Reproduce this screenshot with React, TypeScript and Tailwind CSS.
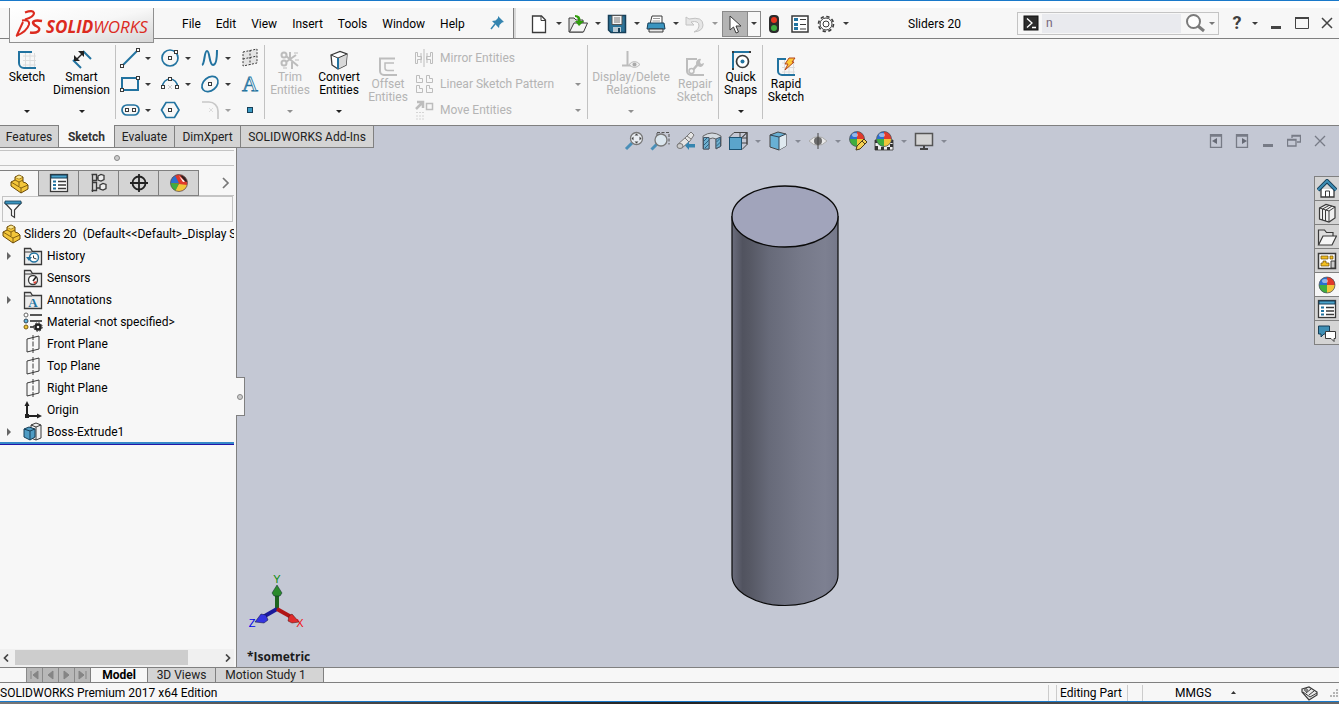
import type { ReactNode } from 'react';

const BLUE = '#2273a0';
const DARK = '#3a3a3a';
const GREY = '#bdbdbd';

function Svg({ children, w = 20, h = 20 }: { children: ReactNode; w?: number; h?: number }) {
  return (
    <svg width={w} height={h} viewBox={`0 0 ${w} ${h}`} fill="none" className="block shrink-0" aria-hidden="true">
      {children}
    </svg>
  );
}

function Caret({ color = DARK }: { color?: string }) {
  return (
    <Svg w={6} h={3}>
      <path d="M0 0h6L3 3z" fill={color} />
    </Svg>
  );
}

// little square handle drawn on sketch entities
function Node({ x, y, color = DARK }: { x: number; y: number; color?: string }) {
  return <rect x={x - 1.5} y={y - 1.5} width="3" height="3" fill="#fff" stroke={color} />;
}

function Ball({ x = 10, y = 10, r = 8 }: { x?: number; y?: number; r?: number }) {
  return (
    <g>
      <circle cx={x} cy={y} r={r} fill="#2b6fd0" />
      <path d={`M${x} ${y}V${y - r}A${r} ${r} 0 0 1 ${x + r} ${y}z`} fill="#e03a2c" />
      <path d={`M${x} ${y}H${x - r}A${r} ${r} 0 0 0 ${x} ${y + r}z`} fill="#3fae3f" />
      <path d={`M${x} ${y}V${y + r}A${r} ${r} 0 0 0 ${x + r} ${y}z`} fill="#f0c63a" />
      <circle cx={x} cy={y} r={r} stroke="#555" strokeWidth=".7" />
      <ellipse cx={x - 2} cy={y - 4} rx="3" ry="2" fill="#fff" opacity=".5" />
    </g>
  );
}

/* ---------- Ribbon icons ---------- */

const SketchIcon = () => (
  <Svg>
    <path d="M6 6h13M6 10.500h13M6 15h13M8.500 3v14M13 3v14M17.500 3v14" stroke="#dcdcdc" />
    <path d="M15 2H2v11a5 5 0 0 0 5 5h12" stroke={BLUE} strokeWidth="2" />
  </Svg>
);

const RapidIcon = () => (
  <Svg>
    <path d="M6 6h13M6 10.500h13M6 15h13M8.500 3v14M13 3v14M17.500 3v14" stroke="#dcdcdc" />
    <path d="M10 2H2v12a4 4 0 0 0 4 4h13" stroke={BLUE} strokeWidth="2" />
    <path d="M13 1h6l-3 4h2l-9 8 3-6H9z" fill="#ffc937" stroke="#b5441c" />
  </Svg>
);

const DimensionIcon = () => (
  <Svg>
    <path d="M1 10l8 8M11 1l8 8" stroke={BLUE} strokeWidth="2" />
    <path d="M4 10L11 3" stroke="#222" strokeWidth="1.500" />
    <path d="M2 11V5l6 6zM12 1v6L6 1z" fill="#222" />
  </Svg>
);

const TrimIcon = () => (
  <Svg>
    <g stroke={GREY} strokeWidth="2">
      <circle cx="4" cy="5" r="2.500" />
      <circle cx="4" cy="13" r="2.500" />
      <path d="M6 6l12 10M6 12L16 5M10 2v6M12 12v7" />
      <path d="M14 3h4M3 18h4M15 10h4" strokeWidth="1" />
    </g>
  </Svg>
);

const ConvertIcon = () => (
  <Svg>
    <path d="M2 5l9-3.500L18 4l-1 11-8 4-6-4z" fill="#fff" stroke={DARK} strokeWidth="1.300" />
    <path d="M9 8l9-4-1 11-8 4z" fill="#d9d9d9" />
    <path d="M2 5l7 3 9-4" stroke={DARK} />
    <path d="M9 8v11" stroke={BLUE} strokeWidth="2" />
  </Svg>
);

const OffsetIcon = () => (
  <Svg>
    <path d="M17 1.500H2V14a4 4 0 0 0 4 4h13" stroke={GREY} strokeWidth="2" />
    <path d="M16 6H7v5a2.500 2.500 0 0 0 2.500 2.500H16" stroke={GREY} strokeWidth="1.500" />
  </Svg>
);

const RelationsIcon = () => (
  <Svg>
    <path d="M6.500 1v15M1 15.500h9" stroke={GREY} strokeWidth="2" />
    <path d="M8 14.500q5.500-6 11 0-5.500 6-11 0z" fill="#eee" stroke={GREY} />
    <circle cx="13.500" cy="14.500" r="2" fill="#aaa" />
  </Svg>
);

const RepairIcon = () => (
  <Svg>
    <path d="M12 2H2v12a4 4 0 0 0 4 4h13" stroke={GREY} strokeWidth="2" />
    <path d="M7 14l7-8" stroke={GREY} strokeWidth="2.500" />
    <path d="M16 2a4 4 0 1 0 3 4l-3 1-1-2z" fill={GREY} />
    <circle cx="6.500" cy="14" r="2.500" fill="#f7f7f7" stroke={GREY} strokeWidth="1.500" />
  </Svg>
);

const SnapsIcon = () => (
  <Svg>
    <path d="M2 19V2h17" stroke={BLUE} strokeWidth="2" />
    <circle cx="11.500" cy="11.500" r="6" fill="#fff" stroke={DARK} strokeWidth="1.700" />
    <circle cx="11.500" cy="11.500" r="2" fill={BLUE} />
    <path d="M1 1h2v2H1zM1 18h2v2H1zM18 1h2v2h-2z" fill={DARK} />
  </Svg>
);

const sketchTools: { name: string; icon: ReactNode; caret?: string }[] = [
  { name: 'Line', caret: DARK, icon: <Svg><path d="M2 18L18 2" stroke={BLUE} strokeWidth="2" /><Node x={2} y={18} /><Node x={18} y={2} /></Svg> },
  { name: 'Circle', caret: DARK, icon: <Svg><circle cx="10" cy="10" r="8" stroke={BLUE} strokeWidth="1.700" /><Node x={10} y={10} /><Node x={16} y={4} /></Svg> },
  { name: 'Spline', caret: DARK, icon: <Svg><path d="M2 17C5 16 4 3 7 3s2 14 6 14 4-11 4-15" stroke={BLUE} strokeWidth="2" /></Svg> },
  { name: 'Sketch Plane', icon: <Svg><path d="M3 4l14-3v14L3 18z" fill="#e4e4e4" /><path d="M3 4l14-3v14L3 18zM10 2v15M3 11l14-3" stroke={DARK} strokeDasharray="2 1.500" /></Svg> },
  { name: 'Rectangle', caret: DARK, icon: <Svg><rect x="2" y="4" width="16" height="12" stroke={BLUE} strokeWidth="2" /><Node x={2} y={16} /><Node x={18} y={4} /></Svg> },
  { name: 'Arc', caret: DARK, icon: <Svg><path d="M2.500 13a7.500 8 0 0 1 15 0" stroke={BLUE} strokeWidth="1.500" /><path d="M8 11l4 4m0-4l-4 4" stroke="#ccc" /><Node x={3} y={13} /><Node x={17} y={13} /><Node x={10} y={5} /></Svg> },
  { name: 'Ellipse', caret: DARK, icon: <Svg><ellipse cx="10" cy="10" rx="9" ry="6.500" transform="rotate(-40 10 10)" stroke={BLUE} strokeWidth="1.700" /><Node x={10} y={10} /></Svg> },
  { name: 'Text', icon: <Svg><text x="10" y="17" textAnchor="middle" fontSize="22" fontFamily="Liberation Serif, serif" fill="#f7f7f7" stroke={BLUE} strokeWidth=".8">A</text></Svg> },
  { name: 'Slot', caret: DARK, icon: <Svg><rect x="2" y="5" width="17" height="10" rx="5" stroke={BLUE} strokeWidth="1.700" /><Node x={7} y={10} /><Node x={14} y={10} /></Svg> },
  { name: 'Polygon', icon: <Svg><path d="M1.500 10L6 2.500h8.500L19 10l-4.500 7.500H6z" stroke={BLUE} strokeWidth="1.700" /><Node x={10} y={10} /></Svg> },
  { name: 'Fillet', caret: '#a0a0a0', icon: <Svg><path d="M2 2h7a9 9 0 0 1 9 9v8" stroke="#c8c8c8" strokeWidth="1.700" /><path d="M9 8l4 4m0-4l-4 4" stroke="#ddd" /></Svg> },
  { name: 'Point', icon: <Svg><rect x="7.500" y="7.500" width="5" height="5" fill="#3b9bc4" stroke="#173f58" /></Svg> },
];

const entityTools = [
  { name: 'Mirror Entities', caret: false, icon: <Svg><path d="M10 1v18M1.500 4.500h2v4h4v3h-4v4h-2zM7 5v10M18.500 4.500h-2v4h-4v3h4v4h2zM13 5v10" stroke={GREY} /></Svg> },
  { name: 'Linear Sketch Pattern', caret: true, icon: <Svg><path d="M2.500 1.500h3v3h3v4h-6zM12.500 1.500h3v3h3v4h-6zM2.500 11.500h3v3h3v4h-6zM12.500 11.500h3v3h3v4h-6z" stroke={GREY} /></Svg> },
  { name: 'Move Entities', caret: true, icon: <Svg><path d="M2 9l6-6M3 2h6v6" stroke={GREY} strokeWidth="2.500" /><rect x="12.500" y="3.500" width="6" height="6" stroke={GREY} strokeWidth="1.500" /><path d="M2 12.500h8M2 16h8M2 19h8" stroke="#d5d5d5" strokeDasharray="2 1" /></Svg> },
];

/* ---------- Quick access icons ---------- */

const quickTools = [
  { name: 'New', off: false, icon: <Svg><path d="M3.500 2h9l4 4v12.500h-13z" fill="#fff" stroke={DARK} strokeWidth="1.300" /><path d="M12 2v4.500h4.500" stroke={DARK} /></Svg> },
  { name: 'Open', off: false, icon: <Svg><path d="M1 4h5l2 2h7v12H1z" fill="#ddd" stroke={DARK} /><path d="M1.500 18L6 9h13.500l-4 9z" fill="#f4f4f4" stroke={DARK} /><path d="M7 1q6 0 5.500 6H16l-5 5-4-5h3q0-4-3-4z" fill="#2f9d0c" /></Svg> },
  { name: 'Save', off: false, icon: <Svg><path d="M1.500 1.500h17v17H4l-2.500-2.500z" fill="#2d7296" stroke="#173f58" strokeWidth="1.500" /><path d="M5 1.500h10v9H5z" fill="#f4f4f4" stroke="#555" /><path d="M7 4h6M7 6h6M7 8h6" stroke="#777" /><path d="M6 13h8v5H6z" fill="#b9cad4" /><path d="M11 14h2v4h-2z" fill="#173f58" /></Svg> },
  { name: 'Print', off: false, icon: <Svg><path d="M6 2h10v8H4z" fill="#fff" stroke={DARK} /><path d="M2 9h16l1 6H1z" fill="#3a94bf" stroke="#173f58" /><path d="M3 15h14v3H3z" fill="#e8e8e8" stroke={DARK} /><path d="M7 4.500h7M6.500 7H14" stroke="#999" /></Svg> },
  { name: 'Undo', off: true, icon: <Svg><path d="M1 3v8h8L6 8q8-2 8 4 0 4-5 6 9-1 9-7 0-9-14-6z" fill="#e6e6e6" stroke="#c2c2c2" /></Svg> },
];

const GearIcon = () => (
  <Svg>
    <circle cx="10" cy="10" r="7.500" stroke={DARK} strokeWidth="1.600" strokeDasharray="3.400 2.500" />
    <circle cx="10" cy="10" r="6" fill="#fff" stroke={DARK} />
    <circle cx="10" cy="10" r="3" fill="#fff" stroke={DARK} />
  </Svg>
);

const ListIcon = () => (
  <Svg>
    <rect x="2" y="2" width="16" height="16" fill="#fff" stroke={DARK} strokeWidth="1.500" />
    <path d="M4 4h4v3H4zM4 9h4v3H4zM4 13h4v3H4z" fill={BLUE} />
    <path d="M10 5.500h6M10 10.500h6M10 15h6" stroke={DARK} />
  </Svg>
);

const TableIcon = () => (
  <Svg>
    <rect x="1.500" y="1.500" width="17" height="17" fill="#fff" stroke={DARK} strokeWidth="1.300" />
    <path d="M2 2h16v3H2z" fill="#4ba3cb" stroke="#173f58" />
    <path d="M4 7.500h3v2H4zM4 11h3v2H4zM4 14.500h3v2H4z" fill={BLUE} />
    <path d="M9 8.500h8M9 12h8M9 15.500h8" stroke={DARK} strokeWidth="1.300" />
  </Svg>
);

const PartIcon = () => (
  <Svg>
    <path d="M2 8l4-2V3l4-2 4 2v5l3 1 2 2v4l-7 4L2 12z" fill="#f3c63a" stroke="#6b4a08" />
    <path d="M2 8l10 6v5M12 14l7-3M6 6l4 2 4-2M10 8v4M6 3l4 2 4-2" stroke="#6b4a08" strokeWidth=".8" />
    <path d="M6.500 3.500l3.500-2 3.500 1.500L10 4.700z" fill="#fce892" />
  </Svg>
);

/* ---------- Viewport toolbar ---------- */

const viewTools: { name: string; icon: ReactNode; menu: boolean }[] = [
  { name: 'Zoom to Fit', menu: false, icon: <Svg><path d="M2 18l6-6" stroke="#4a8fb8" strokeWidth="3" /><circle cx="12.500" cy="7.500" r="6" fill="#e9edf2" stroke="#777" strokeWidth="1.300" /><path d="M12.500 2.500l2 2h-4zM12.500 12.500l2-2h-4zM7.500 7.500l2-2v4zM17.500 7.500l-2-2v4z" fill="#444" /></Svg> },
  { name: 'Zoom to Area', menu: false, icon: <Svg><path d="M7 1.500h12v12M7 5V1" stroke="#555" strokeDasharray="3 1.500" /><path d="M1.500 18.500L7 13" stroke="#4a8fb8" strokeWidth="3" /><circle cx="11" cy="9" r="6" fill="#dbe6ee" stroke="#777" strokeWidth="1.300" /></Svg> },
  { name: 'Previous View', menu: false, icon: <Svg><path d="M1 14l9-8 5-5 3 3-4 6-8 7z" fill="#e4e4e4" stroke="#777" /><path d="M9 7l4 4M11 5l4 3" stroke="#777" /><ellipse cx="4" cy="15" rx="3" ry="2.500" fill="#ccc" stroke="#777" /><path d="M9 14.500l4-4v2.500h6v3.500h-6V19z" fill="#3585b0" /></Svg> },
  { name: 'Section View', menu: false, icon: <Svg><path d="M1 5q9-6 18 0v10l-5 3V8q-3-2-7 0v10H1z" fill="#d3dae0" stroke="#666" /><path d="M1.500 6.500H7v11.500H1.500zM14 8l4.500-2v9.500l-4.500 2z" fill="#6eb0d0" stroke="#456" /><path d="M2 10l3-3M2 14l5-5M3 17l4-4M14.500 11l4-4M14.500 15l4-4" stroke="#2f6380" /></Svg> },
  { name: 'View Orientation', menu: true, icon: <Svg><path d="M6 1.500h13v12M19 1.500l-5 5M6 1.500l-5 5M12 2v9M19 7h-9M10 12h9" stroke="#444" /><rect x="1.500" y="6.500" width="12" height="12" fill="#5ba4cb" stroke="#1c5373" /><path d="M14 18.500l5-5v-12l-5 5" stroke="#444" /></Svg> },
  { name: 'Display Style', menu: true, icon: <Svg><path d="M2 4l8-3 8 2v12l-7 4-9-3z" fill="#68b0d4" stroke="#444" /><path d="M11 6l7-3v12l-7 4z" fill="#dfe9ef" /><path d="M2 4l9 2 7-3M11 6v13" stroke="#345" /></Svg> },
  { name: 'Hide/Show Items', menu: true, icon: <Svg><path d="M1 10q9-9 18 0-9 9-18 0z" fill="#e8e8e8" stroke="#aaa" /><circle cx="10" cy="10" r="4" fill="#6c6c6c" /><path d="M10 2v16" stroke="#444" /></Svg> },
  { name: 'Edit Appearance', menu: false, icon: <Svg><Ball x={9} y={8} r={7.5} /><path d="M8 19l1-4 7-7 3 3-7 7z" fill="#f4cf52" stroke="#4a3a16" /><path d="M14 10l3 3" stroke="#4a3a16" /></Svg> },
  { name: 'Apply Scene', menu: true, icon: <Svg><path d="M1 9h18v10H1z" fill="#eee" stroke="#555" /><path d="M1 9h4v3H1zM15 9h4v3h-4zM1 15h3v4H1zM7 16h3v3H7zM13 16h3v3h-3zM16 13h3v3h-3z" fill="#333" /><Ball x={10} y={8} r={7.5} /></Svg> },
  { name: 'View Settings', menu: true, icon: <Svg><rect x="1.500" y="2.500" width="17" height="12" fill="#d4d4d4" stroke="#555" strokeWidth="1.500" /><path d="M10 15v3M6 18h8" stroke="#444" strokeWidth="2" /></Svg> },
];

const windowTools = [
  { name: 'Previous pane', icon: <Svg w={14} h={14}><path d="M1.500.500h11v13h-11zM1 2h12" stroke="#777b86" strokeWidth="1.300" /><path d="M8 4v6L3 7z" fill="#666a75" /></Svg> },
  { name: 'Next pane', icon: <Svg w={14} h={14}><path d="M1.500.500h11v13h-11zM1 2h12" stroke="#777b86" strokeWidth="1.300" /><path d="M7 4v6l5-3z" fill="#666a75" /></Svg> },
  { name: 'Minimize document', icon: <Svg w={14} h={14}><path d="M2 10h10v3H2z" fill="#777b86" /></Svg> },
  { name: 'Restore document', icon: <Svg w={14} h={14}><path d="M5 4V1.500h8.500V8H10M4.500 2h9M.500 5.500H9V12H.500zM.500 6H9" stroke="#777b86" strokeWidth="1.300" /></Svg> },
  { name: 'Close document', icon: <Svg w={14} h={14}><path d="M2 2l10 10M12 2L2 12" stroke="#777b86" strokeWidth="1.300" /></Svg> },
];

/* ---------- Side panel ---------- */

const panelTabs = [
  { name: 'FeatureManager', icon: <PartIcon /> },
  { name: 'PropertyManager', icon: <TableIcon /> },
  { name: 'ConfigurationManager', icon: <Svg><path d="M3.500 1v18M2.500 1.500h5v6h-4M7 5h3M3.500 9.500h4v8h-5M8 15h3" stroke={DARK} strokeWidth="1.300" /><path d="M9 3l3-1.500 3 1v4L12 8 9 7zM11 12l3-1.500 3 1v4l-3 1.500-3-1z" fill="#eee" stroke={DARK} strokeWidth="1.300" /></Svg> },
  { name: 'DimXpertManager', icon: <Svg><circle cx="10" cy="10" r="6.500" stroke="#222" strokeWidth="1.800" /><path d="M10 1v18M1 10h18" stroke="#222" strokeWidth="1.800" /></Svg> },
  { name: 'DisplayManager', icon: <Svg><circle cx="10" cy="10" r="8.500" fill="#e03a2c" /><path d="M10 10L1.500 10a8.500 8.500 0 0 1 7.500-8.500z" fill="#2b6fd0" /><path d="M10 10L6 2.500a8.500 8.500 0 0 1 4-1z" fill="#e03a2c" /><path d="M11 2q6 1 7.500 7L16 8.500z" fill="#2a2020" /><path d="M10 11l8 1a8.500 8.500 0 0 1-12 5.500z" fill="#f0c63a" /><path d="M10 10.500L1.500 10q0 5 5 7.800z" fill="#3fae3f" /><path d="M10 3l4 6 2-.500z" fill="#fff" /><circle cx="10" cy="10" r="8.500" stroke="#555" strokeWidth=".7" /></Svg> },
];

const Folder = ({ children }: { children: ReactNode }) => (
  <Svg>
    <path d="M1.500 18.500v-16h6l2 3h9v13z" fill="#ededed" stroke={DARK} strokeWidth="1.300" />
    <path d="M2 6h7" stroke={DARK} />
    {children}
  </Svg>
);

const PlaneIcon = () => (
  <Svg>
    <path d="M4 5l12-3v13L4 18z" stroke={DARK} />
    <path d="M10 1v19" stroke={DARK} strokeDasharray="5 1.500" />
  </Svg>
);

const treeItems: { name: string; icon: ReactNode; open?: boolean }[] = [
  { name: 'History', open: true, icon: <Folder><circle cx="11" cy="11.500" r="4.500" fill="#fff" stroke={BLUE} strokeWidth="1.400" /><path d="M3 11h6l-3 4z" fill={BLUE} /><path d="M10.500 9.500V12l3 1" stroke={DARK} /></Folder> },
  { name: 'Sensors', icon: <Folder><circle cx="10" cy="12" r="4.500" fill="#fff" stroke={DARK} strokeWidth="1.300" /><path d="M10 13l3-4" stroke="#222" strokeWidth="1.500" /><path d="M10 14l4-1-2 3z" fill="#e03a2c" /></Folder> },
  { name: 'Annotations', open: true, icon: <Folder><text x="10" y="17" textAnchor="middle" fontSize="13" fontWeight="700" fontFamily="Liberation Serif, serif" fill={BLUE}>A</text></Folder> },
  { name: 'Material <not specified>', icon: <Svg><circle cx="3" cy="3" r="2" fill="#fff" stroke="#666" /><circle cx="3" cy="9" r="2" fill="#5fb7de" stroke="#345" /><circle cx="3" cy="15" r="2" fill="#f0c63a" stroke="#7a5d10" /><path d="M7 3h12M7 9h12M7 15h4" stroke="#222" strokeWidth="1.500" /><circle cx="15" cy="15" r="2.500" stroke="#222" strokeWidth="2.500" /><circle cx="15" cy="15" r="4.200" stroke="#222" strokeDasharray="1.700 1.600" /></Svg> },
  { name: 'Front Plane', icon: <PlaneIcon /> },
  { name: 'Top Plane', icon: <PlaneIcon /> },
  { name: 'Right Plane', icon: <PlaneIcon /> },
  { name: 'Origin', icon: <Svg><path d="M4 4v12h12" stroke="#222" strokeWidth="2" /><path d="M4 1l2.500 5h-5zM19 16l-5-2.500v5z" fill="#222" /><path d="M2 14h4v4H2z" fill="#222" /></Svg> },
  { name: 'Boss-Extrude1', open: true, icon: <Svg><path d="M8 3l5-2 5 2v13l-5 2-5-2z" fill="#f0f0f0" stroke={DARK} /><path d="M13 5v13M8 3l5 2 5-2" stroke={DARK} /><path d="M1 7l5-2 6 2v8l-5 3-6-3z" fill="#4f9cc4" stroke="#173f58" /><path d="M1 7l6 2 5-2M7 9v9" stroke="#173f58" /></Svg> },
];

const taskTabs = [
  { name: 'Home', icon: <Svg><path d="M4 10v8h13v-8" fill="#fff" stroke={DARK} strokeWidth="1.300" /><path d="M1 11l9-9 9 9" stroke="#173f58" strokeWidth="4" /><path d="M1 11l9-9 9 9" stroke="#3d8db5" strokeWidth="2" /><path d="M8.500 18v-6h4v6" stroke={DARK} /></Svg> },
  { name: 'Design Library', icon: <Svg><path d="M2.500 5L9 1.500 18 4v11l-6 4-9.500-3z" fill="#f0f0f0" stroke={DARK} strokeWidth="1.200" /><path d="M2.500 5L12 8l6-4M12 8v11M5.500 6v11M8.500 7v11M5.500 6L12 2.500M9 7l6-4" stroke={DARK} /></Svg> },
  { name: 'File Explorer', icon: <Svg><path d="M1.500 18V3h6l2 2.500H16V9" fill="#ddd" stroke={DARK} strokeWidth="1.200" /><path d="M1.500 18L6 9h13.500L15 18z" fill="#f6f6f6" stroke={DARK} strokeWidth="1.200" /></Svg> },
  { name: 'View Palette', icon: <Svg><rect x="1.500" y="2.500" width="17" height="15" fill="#fff" stroke={DARK} strokeWidth="1.500" /><path d="M4 5h7v3H4zM13 5h3v3h-3zM6 10h3v2h3v3H4v-3h2z" fill="#f4c020" stroke="#6b4a08" strokeWidth=".7" /><path d="M14 10h4v7h-4z" fill="#ccc" stroke={DARK} /></Svg> },
  { name: 'Appearances', icon: <Svg><Ball /></Svg> },
  { name: 'Custom Properties', icon: <TableIcon /> },
  { name: 'Forum', icon: <Svg><path d="M1.500 3h11v8H7l-3 3v-3H1.500z" fill="#3f8fb5" stroke="#173f58" /><path d="M8.500 8.500h10v7H17v3l-3-3H8.500z" fill="#fff" stroke={DARK} /></Svg> },
];

/* ---------- Pieces ---------- */

function BigButton({ label, icon, width, menu, off, low }: {
  label: string;
  icon: ReactNode;
  width: string;
  menu?: boolean;
  off?: boolean;
  low?: boolean;
}) {
  return (
    <button type="button" className={`flex flex-col items-center leading-[13px] ${width} ${low ? 'pt-[18px]' : 'pt-[11px]'} ${off ? 'text-[#b4b4b4]' : 'text-black'}`}>
      {icon}
      <span className="w-min pt-px text-center">{label}</span>
      {menu && <span className="mt-auto pb-3"><Caret color={off ? '#909090' : '#222'} /></span>}
    </button>
  );
}

function Logo() {
  return (
    <div className="absolute left-[9px] top-0 z-10 flex h-[35px] w-[145px] items-center gap-[2px] border border-t-0 border-[#909090] bg-gradient-to-br from-white via-[#f7f7f7] to-[#d6d6d6] pl-1 text-[#dc2b1f]">
      <Svg w={30} h={30}>
        <path d="M11 2.500q8-3 9 .500 0 4-9 6.500" stroke="#dc2b1f" strokeWidth="2.200" />
        <path d="M8 10.500q8-1 7 4-2 7-13 11.500M9 12L3 25" stroke="#dc2b1f" strokeWidth="2" />
        <path d="M28 11q-8-1.500-9 1.500 0 2 4 4t1 5q-3 2-8 1" stroke="#dc2b1f" strokeWidth="2.500" />
      </Svg>
      <span className="pt-1 font-['Open_Sans',sans-serif] text-[17px] italic leading-5"><b>SOLID</b>WORKS</span>
    </div>
  );
}

function TitleBar() {
  return (
    <header className="relative flex h-[31px] items-center border-b border-[#808080]">
      <Logo />
      <div className="flex w-[513px] shrink-0 items-center pl-[182px] pr-2">
        <nav className="flex gap-[15px] pt-px">
          {['File', 'Edit', 'View', 'Insert', 'Tools', 'Window', 'Help'].map((item) => (
            <button key={item} type="button">{item}</button>
          ))}
        </nav>
        <button type="button" aria-label="Pin menu" className="ml-auto">
          <Svg w={16} h={16}>
            <path d="M9 1l6 6-2 .500-2.500 2.500L10 13 3 6l3.500-.500L9 3z" fill="#3585b0" />
            <path d="M6 9l-4 5" stroke="#3585b0" strokeWidth="1.500" />
          </Svg>
        </button>
      </div>
      <div className="h-full w-[3px] border-l border-[#808080] bg-[#d8d8d8]" />
      <div className="ml-[11px] flex items-center pt-px">
        {quickTools.map((tool) => (
          <div key={tool.name} className="flex items-center">
            <button type="button" aria-label={tool.name} className="flex w-6 justify-center">{tool.icon}</button>
            <button type="button" aria-label={`${tool.name} options`} className="flex h-5 w-[15px] items-center justify-center">
              <Caret color={tool.off ? '#999' : DARK} />
            </button>
          </div>
        ))}
        <div className="flex h-[26px] w-[39px] border border-[#8a8a8a]">
          <button type="button" aria-label="Select" className="flex w-[25px] items-center justify-center border-r border-[#8a8a8a] bg-[#b4b4b4]">
            <Svg><path d="M5 2v14l3.500-3 2.500 6 2.500-1-2.500-6h5z" fill="#fff" stroke={DARK} /></Svg>
          </button>
          <button type="button" aria-label="Select options" className="flex grow items-center justify-center"><Caret /></button>
        </div>
        <button type="button" aria-label="Rebuild" className="flex w-[26px] justify-center">
          <Svg><rect x="5" y="1" width="10" height="18" rx="4" fill="#2b2b2b" /><circle cx="10" cy="6" r="3" fill="#e8371f" /><circle cx="10" cy="14" r="3" fill="#3fae3f" /></Svg>
        </button>
        <button type="button" aria-label="File properties" className="flex w-[26px] justify-center"><ListIcon /></button>
        <button type="button" aria-label="Options" className="flex w-[26px] justify-center"><GearIcon /></button>
        <button type="button" aria-label="More options" className="flex h-5 w-[13px] items-center justify-center"><Caret /></button>
      </div>
      <h1 className="grow pt-px text-center">Sliders 20</h1>
      <div className="flex h-[23px] w-[202px] items-center border border-[#c4c4c4] pl-1">
        <Svg>
          <rect x="2" y="3" width="14" height="14" fill="#2c2c2c" stroke="#111" />
          <path d="M5 5.500l5 4.500-5 4.500M10 14.500h4" stroke="#fff" strokeWidth="1.300" />
        </Svg>
        <input aria-label="Search commands" defaultValue="n" className="h-[19px] w-[139px] bg-[#e9eaee] pl-1 text-[#76677a] outline-none" />
        <button type="button" aria-label="Search" className="ml-1">
          <Svg><circle cx="8.500" cy="8.500" r="6.500" fill="#fff" stroke="#7b7b7b" strokeWidth="2" /><path d="M13 13l6 5" stroke="#7b7b7b" strokeWidth="3" /></Svg>
        </button>
        <button type="button" aria-label="Search options" className="flex h-5 grow items-center justify-center"><Caret color="#777" /></button>
      </div>
      <div className="flex items-center pl-2">
        <button type="button" aria-label="Help" className="w-5 text-lg font-bold leading-5 text-[#3f3f3f]">?</button>
        <button type="button" aria-label="Help options" className="flex h-5 w-4 items-center justify-center"><Caret /></button>
        <button type="button" aria-label="Minimize" className="flex w-[26px] justify-center">
          <Svg w={14} h={14}><path d="M2 10h10v3H2z" fill="#444" /></Svg>
        </button>
        <button type="button" aria-label="Maximize" className="flex w-[26px] justify-center">
          <Svg w={14} h={14}><path d="M.500 1.500h13v11H.500z" stroke="#444" /><path d="M0 1h14v2H0z" fill="#444" /></Svg>
        </button>
        <button type="button" aria-label="Close" className="flex w-6 justify-center">
          <Svg w={14} h={14}><path d="M2 2l10 10M12 2L2 12" stroke="#444" strokeWidth="1.500" /></Svg>
        </button>
      </div>
    </header>
  );
}

function Divider() {
  return <div className="my-[6px] w-px bg-[#c2c2c2]" />;
}

function Ribbon() {
  return (
    <section aria-label="Sketch commands" className="flex h-[86px]">
      <div className="flex w-[115px]">
        <BigButton label="Sketch" icon={<SketchIcon />} width="w-[54px]" menu />
        <BigButton label="Smart Dimension" icon={<DimensionIcon />} width="w-[55px]" menu />
      </div>
      <Divider />
      <div className="grid w-[148px] auto-rows-[26px] grid-cols-[40px_40px_40px_28px] pt-[6px]">
        {sketchTools.map((tool) => (
          <div key={tool.name} className="flex items-center pl-1">
            <button type="button" aria-label={tool.name}>{tool.icon}</button>
            {tool.caret && (
              <button type="button" aria-label={`${tool.name} options`} className="flex h-5 w-5 items-center justify-center">
                <Caret color={tool.caret} />
              </button>
            )}
          </div>
        ))}
      </div>
      <Divider />
      <div className="flex w-[322px]">
        <BigButton label="Trim Entities" icon={<TrimIcon />} width="w-[50px]" menu off />
        <BigButton label="Convert Entities" icon={<ConvertIcon />} width="w-[48px]" menu />
        <BigButton label="Offset Entities" icon={<OffsetIcon />} width="w-[50px]" off low />
        <div className="flex grow flex-col pt-[6px] text-[#b4b4b4]">
          {entityTools.map((tool) => (
            <button key={tool.name} type="button" className="flex h-[26px] items-center gap-[6px] pl-px pr-[6px]">
              {tool.icon}
              <span>{tool.name}</span>
              {tool.caret && <span className="ml-auto"><Caret color="#909090" /></span>}
            </button>
          ))}
        </div>
      </div>
      <Divider />
      <div className="flex w-[130px]">
        <BigButton label="Display/Delete Relations" icon={<RelationsIcon />} width="w-[86px]" menu off />
        <BigButton label="Repair Sketch" icon={<RepairIcon />} width="w-[42px]" off low />
      </div>
      <Divider />
      <BigButton label="Quick Snaps" icon={<SnapsIcon />} width="w-[43px]" menu />
      <Divider />
      <BigButton label="Rapid Sketch" icon={<RapidIcon />} width="w-[46px]" low />
    </section>
  );
}

function CommandTabs() {
  const tabs = ['Features', 'Sketch', 'Evaluate', 'DimXpert', 'SOLIDWORKS Add-Ins'];
  const widths = ['w-[59px]', 'w-[56px]', 'w-[60px]', 'w-[66px]', 'w-[133px]'];
  return (
    <div role="tablist" className="flex h-[23px]">
      {tabs.map((tab, i) => (
        <button
          key={tab}
          type="button"
          role="tab"
          aria-selected={tab === 'Sketch'}
          className={`whitespace-nowrap border-b border-r border-[#808080] ${widths[i]} ${
            tab === 'Sketch' ? 'bg-[#f7f7f7] pt-px font-bold text-[#333]' : 'border-t bg-[#d4d4d4] text-[#222]'
          }`}
        >
          {tab}
        </button>
      ))}
      <div className="grow border-t border-[#808080]" />
    </div>
  );
}

function FeaturePanel() {
  return (
    <aside className="relative flex w-[237px] shrink-0 flex-col border-r border-[#808080] bg-[#f7f7f7] pr-[2px]">
      <div className="mt-[2px] flex h-4 items-center justify-center border-y border-[#c4c4c4]">
        <span className="size-[6px] rounded-full border border-[#888] bg-[#ccc]" />
      </div>
      <div className="mt-1 flex h-[26px]">
        {panelTabs.map((tab, i) => (
          <button
            key={tab.name}
            type="button"
            aria-label={tab.name}
            className={`flex items-center justify-center border-r border-t border-[#808080] ${
              i === 0 ? 'w-[39px] bg-[#f7f7f7]' : 'w-[40px] border-b bg-[#d4d4d4]'
            }`}
          >
            {tab.icon}
          </button>
        ))}
        <button type="button" aria-label="More tabs" className="flex grow items-center justify-end border-b border-[#c4c4c4] pr-1">
          <Svg w={9} h={12}><path d="M2 1l5 5-5 5" stroke="#777" strokeWidth="1.700" /></Svg>
        </button>
      </div>
      <label className="ml-[2px] mr-px flex h-[26px] items-center border border-[#c4c4c4]">
        <Svg>
          <path d="M2 4h16l-6.500 7v7.500l-3-2V11z" fill="#fff" stroke={DARK} strokeWidth="1.200" />
          <path d="M2 2h16v3H2z" fill="#3a94bf" stroke="#173f58" strokeWidth=".8" />
        </Svg>
        <input aria-label="Filter tree" className="min-w-0 grow outline-none" />
      </label>
      <div className="border-b border-[#2216a8]">
        <div className="border-b-2 border-[#3588c8] pt-px">
          <div className="flex h-[22px] items-center gap-[3px] whitespace-pre pl-px">
            <PartIcon />
            <span className="min-w-0 overflow-hidden">Sliders 20  (Default&lt;&lt;Default&gt;_Display S</span>
          </div>
          <ul className="-mb-px">
            {treeItems.map((item) => (
              <li key={item.name} className="flex h-[22px] items-center">
                <span className="flex w-[23px] pl-[7px]">
                  {item.open && <Svg w={4} h={8}><path d="M0 0l4 4-4 4z" fill="#666" /></Svg>}
                </span>
                {item.icon}
                <span className="pl-1">{item.name}</span>
              </li>
            ))}
          </ul>
        </div>
      </div>
      <div className="mt-auto flex h-[18px] items-center justify-between bg-[#f0f0f0] pb-[2px] pt-px">
        <button type="button" aria-label="Scroll left" className="flex w-3 justify-center">
          <Svg w={6} h={8}><path d="M5 .500L1.500 4 5 7.500" stroke="#444" strokeWidth="1.700" /></Svg>
        </button>
        <div className="h-[15px] grow px-[3px]"><div className="h-full w-[85%] bg-[#cdcdcd]" /></div>
        <button type="button" aria-label="Scroll right" className="flex w-3 justify-center">
          <Svg w={6} h={8}><path d="M1 .500L4.500 4 1 7.500" stroke="#444" strokeWidth="1.700" /></Svg>
        </button>
      </div>
      {/* splitter handle, sticks out over the viewport */}
      <div className="absolute -right-[9px] top-[229px] flex h-[39px] w-[9px] items-center justify-center border border-l-0 border-[#808080] bg-[#f7f7f7]">
        <span className="size-[6px] rounded-full border border-[#888] bg-[#ccc]" />
      </div>
    </aside>
  );
}

function Cylinder() {
  return (
    <svg width="108" height="422" viewBox="0 0 108 422" role="img" aria-label="Cylinder model">
      <defs>
        <linearGradient id="side">
          <stop offset="0" stopColor="#6b6d7d" />
          <stop offset=".1" stopColor="#51535f" />
          <stop offset=".17" stopColor="#565864" />
          <stop offset=".35" stopColor="#676a79" />
          <stop offset=".65" stopColor="#767989" />
          <stop offset=".88" stopColor="#7d8091" />
          <stop offset="1" stopColor="#75788a" />
        </linearGradient>
      </defs>
      <path d="M1 31.500V390a53 30.500 0 0 0 106 0V31.500z" fill="url(#side)" stroke="#0a0a0a" strokeWidth="1.200" />
      <ellipse cx="54" cy="31.500" rx="53" ry="30.500" fill="#a1a4bb" stroke="#0a0a0a" strokeWidth="1.300" />
    </svg>
  );
}

function Triad() {
  return (
    <svg width="60" height="58" viewBox="0 0 60 58" fill="none" fontSize="11" fontFamily="Liberation Sans, sans-serif" textAnchor="middle" aria-label="Orientation axes">
      <path d="M32 36V16" stroke="#1d641d" strokeWidth="4" />
      <path d="M32 36L18 44" stroke="#1a1a9a" strokeWidth="4" />
      <path d="M32 36l16 9" stroke="#b01515" strokeWidth="4" />
      <path d="M32 12l5 8-2 3h-6l-2-3z" fill="#2a8a2a" stroke="#123" strokeWidth=".5" />
      <path d="M10 49l6-8 5 1 2 5-4 3z" fill="#3434e0" stroke="#113" strokeWidth=".5" />
      <path d="M54 49l-7-8-3 2-1 5 4 2z" fill="#e02c2c" stroke="#411" strokeWidth=".5" />
      <text x="32" y="10" fill="#0a8a0a">Y</text>
      <text x="7" y="54" fill="#0000e8">Z</text>
      <text x="55" y="54" fill="#f01010">X</text>
    </svg>
  );
}

function Viewport() {
  return (
    <main className="relative flex grow items-center justify-center pb-6 pr-[6px]">
      <Cylinder />
      <div className="absolute bottom-0 left-2">
        <Triad />
        <p className="mt-[14px] h-[22px] pl-[2px] pt-1 font-['Open_Sans',sans-serif] font-bold text-[#1c1c1c]">*Isometric</p>
      </div>
      <div className="absolute -top-[17px] left-0 flex w-full items-center justify-center pr-1">
        {viewTools.map((tool) => (
          <div key={tool.name} className="flex items-center">
            <button type="button" aria-label={tool.name} className="flex w-[26px] justify-center">{tool.icon}</button>
            {tool.menu && (
              <button type="button" aria-label={`${tool.name} options`} className="flex h-5 w-[14px] items-center justify-center">
                <Caret color="#858994" />
              </button>
            )}
          </div>
        ))}
      </div>
      <div className="absolute -top-[14px] right-[6px] flex">
        {windowTools.map((tool) => (
          <button key={tool.name} type="button" aria-label={tool.name} className="flex w-[26px] justify-center">{tool.icon}</button>
        ))}
      </div>
      <div className="absolute right-0 top-7 flex flex-col border-l border-t border-[#808080]">
        {taskTabs.map((tab) => (
          <button
            key={tab.name}
            type="button"
            aria-label={tab.name}
            className={`flex h-6 w-6 items-center justify-center border-b border-[#808080] ${tab.name === 'Appearances' ? 'bg-[#f7f7f7]' : 'bg-[#d4d4d4]'}`}
          >
            {tab.icon}
          </button>
        ))}
      </div>
    </main>
  );
}

function StudyTabs() {
  const arrows = ['M4 3v8M11 3v8L6 7z', 'M10 3v8L5 7z', 'M5 3v8l5-4z', 'M11 3v8M4 3v8l5-4z'];
  const names = ['First tab', 'Previous tab', 'Next tab', 'Last tab'];
  return (
    <div className="flex h-4 border-y border-[#808080] bg-[#f7f7f7] leading-3">
      <div className="ml-[26px] flex border-r border-[#808080]">
        {arrows.map((d, i) => (
          <button key={d} type="button" aria-label={names[i]} className="w-4 border-l border-[#8a8a8a] bg-[#b8b8b8]">
            <Svg w={15} h={14}><path d={d} fill="#858585" stroke="#858585" /></Svg>
          </button>
        ))}
      </div>
      <button type="button" className="w-[57px] border-r border-[#808080] font-bold">Model</button>
      <button type="button" className="w-[68px] border-r border-[#808080] bg-[#d4d4d4] text-[#222]">3D Views</button>
      <button type="button" className="w-[108px] border-r border-[#808080] bg-[#d4d4d4] pr-2 text-[#222]">Motion Study 1</button>
    </div>
  );
}

function StatusBar() {
  return (
    <footer className="flex h-[18px] items-center bg-[#f7f7f7] pt-px">
      <span>SOLIDWORKS Premium 2017 x64 Edition</span>
      <div className="ml-auto flex h-4 items-center">
        <div className="h-full w-2 border-l border-[#ccc]" />
        <span className="flex h-full w-[71px] items-center border-l border-[#ccc] pl-[3px]">Editing Part</span>
        <div className="h-full w-4 border-x border-[#ccc]" />
        <button type="button" className="flex w-[157px] items-center gap-5 pl-8">
          MMGS
          <Svg w={5} h={3}><path d="M0 3h5L2.500 0z" fill="#333" /></Svg>
        </button>
        <button type="button" aria-label="Tags" className="mr-3">
          <Svg w={18} h={16}>
            <path d="M2 4l7-2 8 5v3l-8 5-7-8z" fill="#e8e8e8" stroke={DARK} strokeWidth="1.200" />
            <path d="M3 7l7 5 7-4M6 8l5-4M9 10l5-4" stroke={DARK} />
            <circle cx="6" cy="5" r="1.300" fill="#fff" stroke={DARK} />
          </Svg>
        </button>
        <Svg w={9} h={12}><path d="M6 2h2v2H6zM3 5h2v2H3zM6 5h2v2H6zM0 8h2v2H0zM3 8h2v2H3zM6 8h2v2H6z" fill="#b5b5b5" /></Svg>
      </div>
    </footer>
  );
}

export default function App() {
  return (
    <div className="flex h-screen flex-col overflow-hidden bg-[#f7f7f7] font-['Roboto',sans-serif] text-xs leading-4 text-black">
      <div className="h-2 shrink-0 border-t border-[#1979ca] bg-white" />
      <TitleBar />
      <Ribbon />
      <div className="flex min-h-0 grow flex-col bg-[#c4c8d4]">
        <CommandTabs />
        <div className="flex min-h-0 grow">
          <FeaturePanel />
          <Viewport />
        </div>
      </div>
      <StudyTabs />
      <StatusBar />
      <div className="h-[3px] shrink-0 border-t border-[#1979ca] bg-gradient-to-r from-[#777] via-[#222] to-[#666]" />
    </div>
  );
}
